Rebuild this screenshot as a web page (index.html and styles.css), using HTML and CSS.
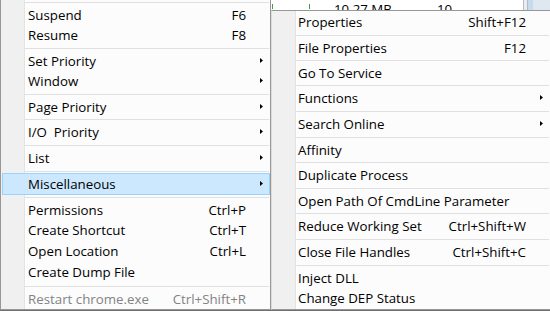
FILE: index.html
```html
<!DOCTYPE html>
<html lang="en">
<head>
    <meta charset="UTF-8">
    <meta name="viewport" content="width=device-width, initial-scale=1.0">
    <title>Process context menu</title>
    <link rel="stylesheet" href="styles.css">
</head>
<body>
    <div class="screen">
        <!-- process list window peeking out behind the submenu -->
        <div class="backdrop">
            <span class="tick"></span>
            <span class="tick tick-far"></span>
            <span class="cell cell-size">10.27 MB</span>
            <span class="cell cell-num">10</span>
            <span class="scrollbar"></span>
        </div>

        <div class="menu menu-main">
            <div class="sep"></div>
            <div class="item"><span class="label">Suspend</span><span class="key">F6</span></div>
            <div class="item"><span class="label">Resume</span><span class="key">F8</span></div>
            <div class="sep"></div>
            <div class="item"><span class="label">Set Priority</span><span class="arrow"><svg width="3" height="5" viewBox="0 0 3 5"><polygon points="0,0 3,2.5 0,5"/></svg></span></div>
            <div class="item"><span class="label">Window</span><span class="arrow"><svg width="3" height="5" viewBox="0 0 3 5"><polygon points="0,0 3,2.5 0,5"/></svg></span></div>
            <div class="sep"></div>
            <div class="item"><span class="label">Page Priority</span><span class="arrow"><svg width="3" height="5" viewBox="0 0 3 5"><polygon points="0,0 3,2.5 0,5"/></svg></span></div>
            <div class="sep thin"></div>
            <div class="item"><span class="label">I/O&nbsp; Priority</span><span class="arrow"><svg width="3" height="5" viewBox="0 0 3 5"><polygon points="0,0 3,2.5 0,5"/></svg></span></div>
            <div class="sep"></div>
            <div class="item"><span class="label">List</span><span class="arrow"><svg width="3" height="5" viewBox="0 0 3 5"><polygon points="0,0 3,2.5 0,5"/></svg></span></div>
            <div class="sep"></div>
            <div class="item active"><span class="label">Miscellaneous</span><span class="arrow"><svg width="3" height="5" viewBox="0 0 3 5"><polygon points="0,0 3,2.5 0,5"/></svg></span></div>
            <div class="sep"></div>
            <div class="item"><span class="label">Permissions</span><span class="key">Ctrl+P</span></div>
            <div class="item tall"><span class="label">Create Shortcut</span><span class="key">Ctrl+T</span></div>
            <div class="item tall"><span class="label">Open Location</span><span class="key">Ctrl+L</span></div>
            <div class="item tall"><span class="label">Create Dump File</span></div>
            <div class="sep"></div>
            <div class="item disabled"><span class="label">Restart chrome.exe</span><span class="key">Ctrl+Shift+R</span></div>
        </div>

        <div class="menu menu-sub">
            <div class="item"><span class="label">Properties</span><span class="key">Shift+F12</span></div>
            <div class="sep"></div>
            <div class="item"><span class="label">File Properties</span><span class="key">F12</span></div>
            <div class="sep thin"></div>
            <div class="item"><span class="label">Go To Service</span></div>
            <div class="sep thin"></div>
            <div class="item"><span class="label">Functions</span><span class="arrow"><svg width="3" height="5" viewBox="0 0 3 5"><polygon points="0,0 3,2.5 0,5"/></svg></span></div>
            <div class="sep"></div>
            <div class="item"><span class="label">Search Online</span><span class="arrow"><svg width="3" height="5" viewBox="0 0 3 5"><polygon points="0,0 3,2.5 0,5"/></svg></span></div>
            <div class="sep"></div>
            <div class="item"><span class="label">Affinity</span></div>
            <div class="sep thin"></div>
            <div class="item"><span class="label">Duplicate Process</span></div>
            <div class="sep"></div>
            <div class="item"><span class="label">Open Path Of CmdLine Parameter</span></div>
            <div class="sep thin"></div>
            <div class="item"><span class="label">Reduce Working Set</span><span class="key">Ctrl+Shift+W</span></div>
            <div class="sep"></div>
            <div class="item"><span class="label">Close File Handles</span><span class="key">Ctrl+Shift+C</span></div>
            <div class="sep"></div>
            <div class="item"><span class="label">Inject DLL</span></div>
            <div class="item"><span class="label">Change DEP Status</span></div>
        </div>
    </div>
</body>
</html>
```

FILE: styles.css
```css
* {
    margin: 0;
    padding: 0;
    box-sizing: border-box;
}

body {
    font-family: "Open Sans", "Noto Sans", sans-serif;
    font-size: 13.3px;
    color: #000;
    background: #6f6f6f;
}

.screen {
    position: relative;
    width: 550px;
    height: 311px;
    overflow: hidden;
    display: flex;
    align-items: flex-start;
    background: #6f6f6f;
}

/* window behind the menus */
.backdrop {
    position: absolute;
    top: 0;
    left: 271px;
    right: 0;
    height: 10px;
    background: #fff;
    overflow: hidden;
    display: flex;
    line-height: 18px;
}

.tick {
    width: 1px;
    height: 5px;
    margin: 4px 0 0 1px;
    background: #3aa04a;
}

.tick-far {
    margin-left: 36px;
}

.cell-size {
    margin-left: 24px;
}

.cell-num {
    margin-left: 45px;
}

.scrollbar {
    margin-left: auto;
    width: 27px;
    height: 10px;
    border-left: 1px solid #b9b9b9;
    background: linear-gradient(to right, #ececec 0 3px, #a8bcd4 3px 4px, #c9d9ec 4px 9px, #dfe7f1 9px);
}

/* menus */
.menu {
    flex: none;
    background: linear-gradient(to right, #f0f0f0 0 23px, #e2e3e3 23px 24px, #fff 24px 25px, #fcfcfc 25px);
    border: 1px solid #979797;
}

.menu-main {
    width: 271px;
    margin-top: -1px;
    border-top: none;
}

.menu-sub {
    width: 280px;
    margin-top: 10px;
    padding: 1px 0;
    border-left-color: #dcdcdc;
}

.item {
    position: relative;
    display: grid;
    grid-template-columns: 1fr auto 24px;
    align-items: center;
    height: 20px;
    padding: 0 0 1px 27px;
    white-space: nowrap;
}

.menu-sub .item {
    padding-left: 26px;
}

.item.tall {
    height: 21px;
}

.item > span {
    position: relative;
}

.key {
    grid-column: 2;
    text-align: right;
}

.arrow {
    grid-column: 3;
    justify-self: end;
    margin-right: 7px;
    display: flex;
}

.arrow svg {
    fill: #000;
}

.item.active::before {
    content: "";
    position: absolute;
    top: -1px;
    bottom: -1px;
    left: 1px;
    right: 0;
    background: #cce8ff;
    border: 1px solid #99d1ff;
}

.item.disabled {
    color: #838383;
}

.sep {
    margin: 3px 1px 2px 24px;
    border-top: 1px solid #e0e0e0;
}

.sep.thin {
    margin-top: 2px;
}
```
